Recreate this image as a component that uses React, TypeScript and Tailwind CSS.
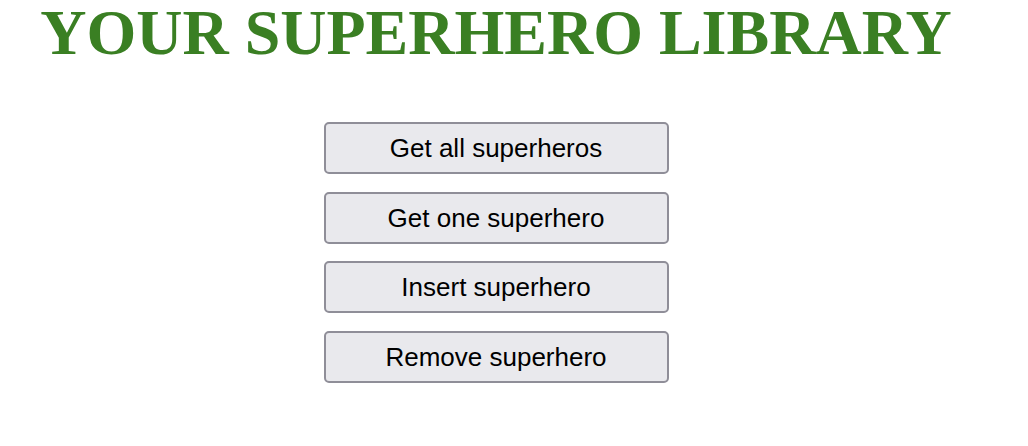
import React from "react";

const buttons = ["Get all superheros", "Get one superhero", "Insert superhero", "Remove superhero"];

export default function App() {
  return (
    <div className="w-[1028px] h-[446px] bg-white overflow-hidden">
      <div className="w-[992px] flex flex-col items-center">
        <h1
          className="text-[64px] leading-[66px] font-bold text-[#3a7f23] whitespace-nowrap"
          style={{ fontFamily: '"Liberation Serif", "Times New Roman", serif' }}
        >
          YOUR SUPERHERO LIBRARY
        </h1>
        <div className="mt-[56px] flex flex-col gap-[17.5px]">
          {buttons.map((b) => (
            <button
              key={b}
              className="w-[345px] h-[52px] rounded-[5px] border-2 border-[#8f8e98] bg-[#e9e9ed] text-black text-[26px] leading-none flex items-center justify-center"
              style={{ fontFamily: '"Liberation Sans", Arial, sans-serif' }}
            >
              {b}
            </button>
          ))}
        </div>
      </div>
    </div>
  );
}
